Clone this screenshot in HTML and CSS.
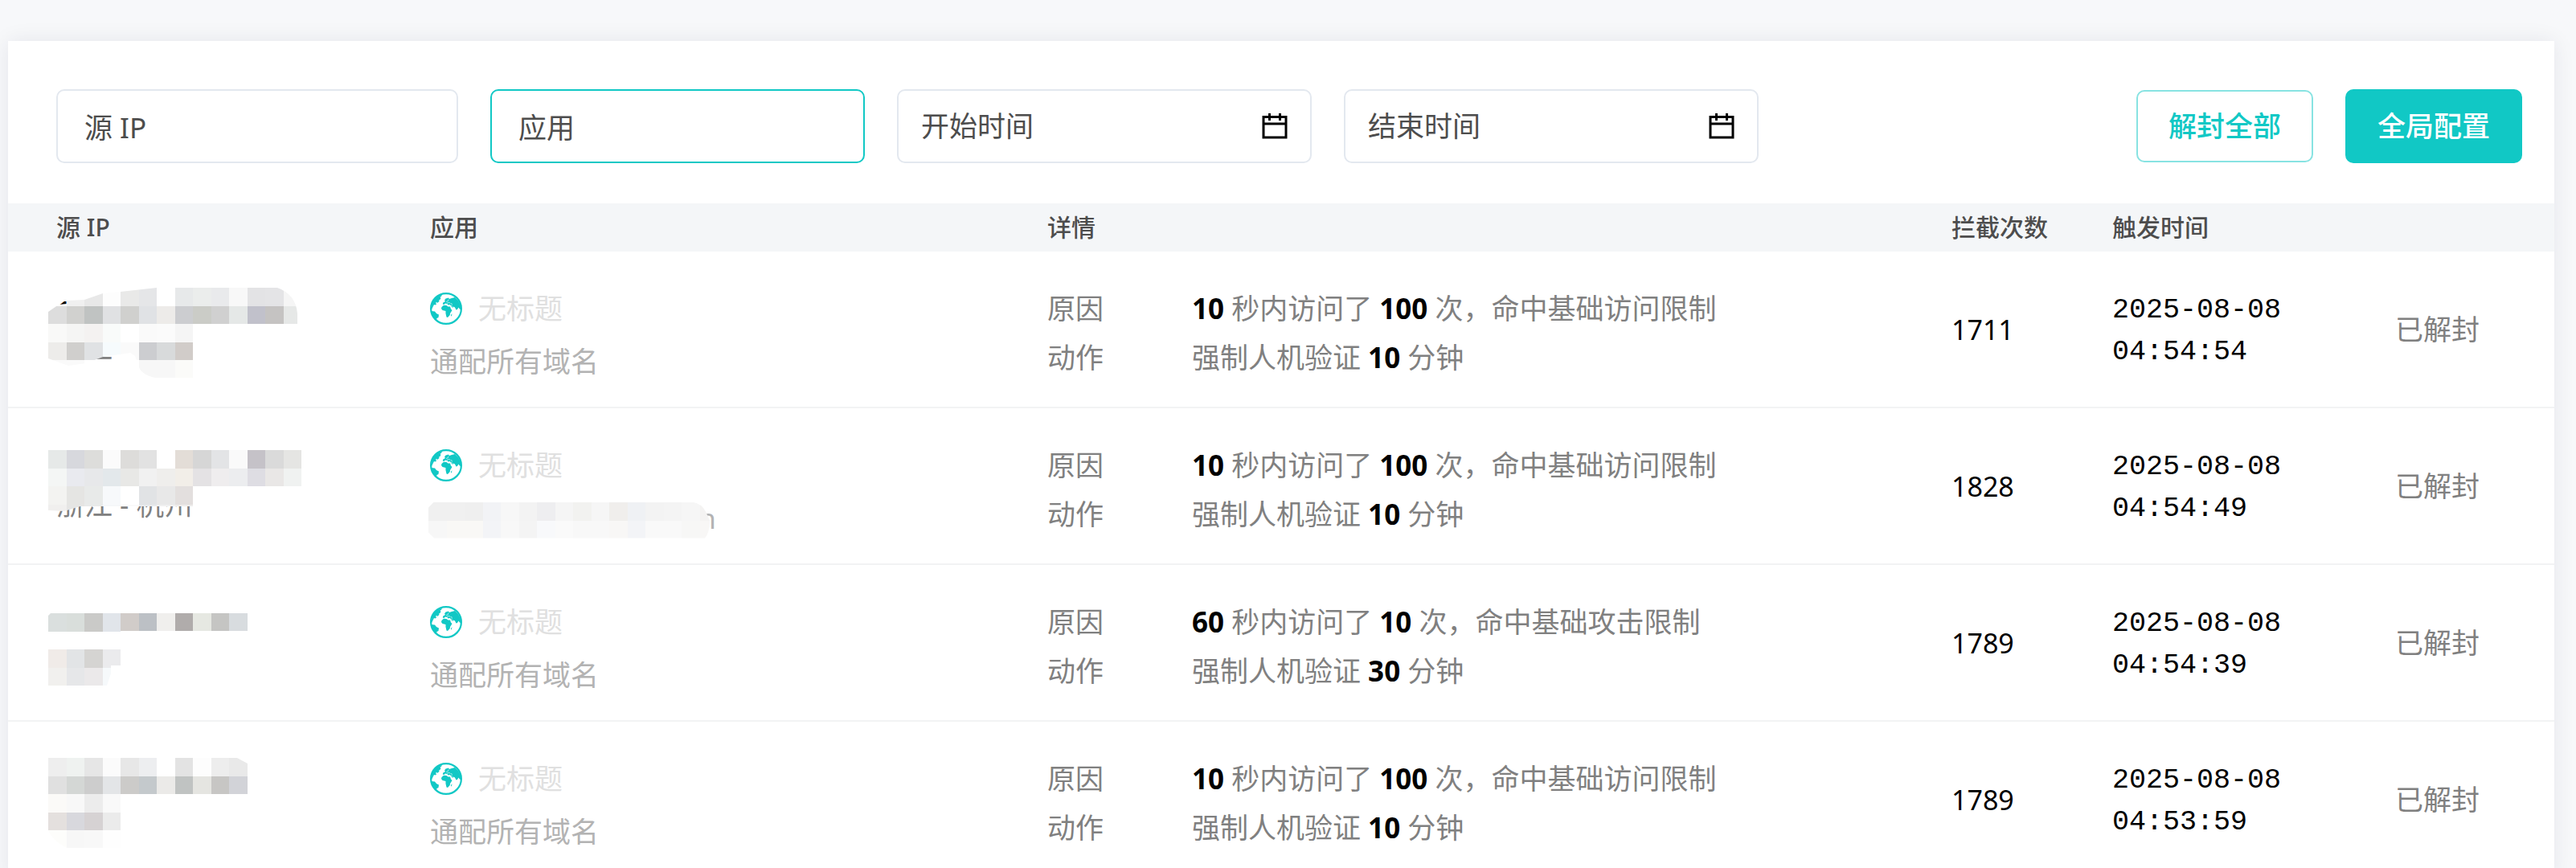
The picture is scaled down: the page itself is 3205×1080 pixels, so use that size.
FILE: index.html
```html
<!DOCTYPE html>
<html lang="zh-CN">

<head>
  <meta charset="UTF-8">
  <title>频率限制</title>
  <link rel="stylesheet" href="styles.css">
</head>

<body>
  <svg class="sprite" aria-hidden="true">
    <symbol id="globe" viewBox="0 0 40 40">
      <circle cx="20" cy="20" r="18.9" fill="none" stroke="currentColor" stroke-width="2.2" />
      <path fill="currentColor" d="M2 18L3 11L9 5L15 2.5L14 5L12.5 5.5L13.5 7L12 9.5L11 9L11.5 11L9 13L8 11.5L7 13.5L8.500 14L6.500 15.500L5 15L3.500 18L2 21Z" />
      <path fill="currentColor" d="M1.500 23L6 23.500L8 26L11 27.500L10.500 31L8.500 32L7.500 35L4 31Z" />
      <path fill="currentColor" d="M14.500 18L17 15.800L20.500 16L22.500 17.500L25 17.500L26 20.500L27.500 22L26 24.500L25 26L24.800 28L22 31L20.500 30.500L19.500 26L19.500 23L15.500 22L14 20Z" />
      <path fill="currentColor" d="M15.800 14.500L16.300 12.500L19 11L18 9.500L19.500 7.500L23 6.500L24 8L27 7L31 6L35 10L38 15L39 22L36.500 20L35.500 18.500L34 21L32.500 21.500L31 18.500L29 17.500L28.500 19L26.500 17.500L25 15L22.500 15.500L21.500 14L19 13.500L17.500 15Z" />
      <path fill="currentColor" d="M26.200 27.500L27.400 26.300L27 29L26 29.500Z" />
      <path fill="none" stroke="#fff" stroke-width="0.6" d="M20 11.500L22.500 10.500L23 8.500M21 13L24 12.500L25.500 13.500M26.500 13L27.500 15.500M26 16L28.500 18" />
    </symbol>
    <symbol id="calendar" viewBox="0 0 32 32">
      <path fill="none" stroke="#000" stroke-width="3" d="M2 4.500H30V30H2ZM2 13H30M9.500 0V9M22.500 0V9" />
    </symbol>
  </svg>

  <main class="card">
    <form class="toolbar">
      <div class="field field-ip">
        <input type="text" placeholder="源 IP" aria-label="源 IP">
      </div>
      <div class="field field-app active">
        <input type="text" placeholder="应用" aria-label="应用">
      </div>
      <div class="field field-date">
        <input type="text" placeholder="开始时间" aria-label="开始时间">
        <button type="button" class="picker" aria-label="开始时间"><svg><use href="#calendar" /></svg></button>
      </div>
      <div class="field field-date">
        <input type="text" placeholder="结束时间" aria-label="结束时间">
        <button type="button" class="picker" aria-label="结束时间"><svg><use href="#calendar" /></svg></button>
      </div>
      <div class="actions">
        <button type="button" class="btn btn-outline">解封全部</button>
        <button type="button" class="btn btn-primary">全局配置</button>
      </div>
    </form>

    <table class="records">
      <thead>
        <tr>
          <th class="col-ip">源 IP</th>
          <th class="col-app">应用</th>
          <th class="col-detail">详情</th>
          <th class="col-count">拦截次数</th>
          <th class="col-time">触发时间</th>
          <th class="col-status"></th>
        </tr>
      </thead>
      <tbody>
        <tr>
          <td class="source">
            <div class="ip">1</div>
            <div class="region">浙江</div>
            <svg class="mosaic mosaic-1" data-mosaic="ip1"></svg>
          </td>
          <td>
            <div class="app-name"><svg class="globe"><use href="#globe" /></svg>无标题</div>
            <div class="domain">通配所有域名</div>
          </td>
          <td>
            <dl class="detail">
              <dt>原因</dt>
              <dd><b>10</b> 秒内访问了 <b>100</b> 次，命中基础访问限制</dd>
              <dt>动作</dt>
              <dd>强制人机验证 <b>10</b> 分钟</dd>
            </dl>
          </td>
          <td class="count">1711</td>
          <td class="time">2025-08-08<br>04:54:54</td>
          <td class="status">已解封</td>
        </tr>
        <tr>
          <td class="source">
            <div class="ip"></div>
            <div class="region">浙江 - 杭州</div>
            <svg class="mosaic mosaic-2" data-mosaic="ip2"></svg>
          </td>
          <td>
            <div class="app-name"><svg class="globe"><use href="#globe" /></svg>无标题</div>
            <div class="domain domain-hidden">n<svg class="mosaic mosaic-domain" data-mosaic="domain"></svg></div>
          </td>
          <td>
            <dl class="detail">
              <dt>原因</dt>
              <dd><b>10</b> 秒内访问了 <b>100</b> 次，命中基础访问限制</dd>
              <dt>动作</dt>
              <dd>强制人机验证 <b>10</b> 分钟</dd>
            </dl>
          </td>
          <td class="count">1828</td>
          <td class="time">2025-08-08<br>04:54:49</td>
          <td class="status">已解封</td>
        </tr>
        <tr>
          <td class="source">
            <svg class="mosaic mosaic-3" data-mosaic="ip3"></svg>
          </td>
          <td>
            <div class="app-name"><svg class="globe"><use href="#globe" /></svg>无标题</div>
            <div class="domain">通配所有域名</div>
          </td>
          <td>
            <dl class="detail">
              <dt>原因</dt>
              <dd><b>60</b> 秒内访问了 <b>10</b> 次，命中基础攻击限制</dd>
              <dt>动作</dt>
              <dd>强制人机验证 <b>30</b> 分钟</dd>
            </dl>
          </td>
          <td class="count">1789</td>
          <td class="time">2025-08-08<br>04:54:39</td>
          <td class="status">已解封</td>
        </tr>
        <tr>
          <td class="source">
            <svg class="mosaic mosaic-4" data-mosaic="ip4"></svg>
          </td>
          <td>
            <div class="app-name"><svg class="globe"><use href="#globe" /></svg>无标题</div>
            <div class="domain">通配所有域名</div>
          </td>
          <td>
            <dl class="detail">
              <dt>原因</dt>
              <dd><b>10</b> 秒内访问了 <b>100</b> 次，命中基础访问限制</dd>
              <dt>动作</dt>
              <dd>强制人机验证 <b>10</b> 分钟</dd>
            </dl>
          </td>
          <td class="count">1789</td>
          <td class="time">2025-08-08<br>04:53:59</td>
          <td class="status">已解封</td>
        </tr>
      </tbody>
    </table>
  </main>
  <script src="mosaic.js"></script>
</body>

</html>
```
FILE: styles.css
```css
* {
  box-sizing: border-box;
}

html,
body {
  height: 100%;
}

body {
  margin: 0;
  padding: 51px 27px 0 10px;
  overflow: hidden;
  background-color: #f7f8fa;
  color: #000;
  font-family: "Noto Sans", "Noto Sans CJK SC", sans-serif;
  font-size: 35px;
  line-height: 52px;
}

.sprite {
  position: absolute;
  width: 0;
  height: 0;
}

.card {
  background-color: #fff;
  box-shadow: 0 0 25px rgba(0, 10, 60, 0.08);
}

/* toolbar */
.toolbar {
  display: flex;
  align-items: center;
  gap: 40px;
  padding: 60px 40px 50px 60px;
}

.field {
  display: flex;
  align-items: center;
  height: 92px;
  border: 2px solid #e3e8ef;
  border-radius: 10px;
  padding: 0 28px;
}

.field-ip {
  width: 500px;
  padding: 3px 33px 0;
}

.field-app {
  width: 466px;
  padding: 3px 33px 0;
}

.field-date {
  width: 516px;
}

.field.active {
  border-color: #11c8c5;
}

.field input {
  flex: 1;
  min-width: 0;
  height: 52px;
  border: 0;
  padding: 0;
  outline: none;
  background: none;
  color: #4d4d4d;
  font: inherit;
}

.field input::placeholder {
  color: #4d4d4d;
  opacity: 1;
}

.picker {
  display: flex;
  border: 0;
  padding: 0;
  background: none;
}

.picker svg {
  width: 32px;
  height: 32px;
}

.actions {
  display: flex;
  align-items: center;
  gap: 40px;
  margin-left: auto;
}

.btn {
  height: 92px;
  border: 0;
  border-radius: 10px;
  padding: 0 40px;
  font: inherit;
  font-weight: 500;
}

.btn-outline {
  height: 90px;
  border: 2px solid #88e3e2;
  padding: 0 38px;
  background-color: #fff;
  color: #11c8c5;
}

.btn-primary {
  background-color: #11c8c5;
  color: #fff;
}

/* table */
.records {
  width: 100%;
  table-layout: fixed;
  border-collapse: separate;
  border-spacing: 0;
}

.records th {
  height: 60px;
  padding: 0;
  background-color: #f4f6f8;
  color: #4d4d4d;
  font-size: 30px;
  font-weight: 500;
  text-align: left;
}

.records th:first-child,
.records td:first-child {
  padding-left: 60px;
}

.records td {
  height: 195px;
  padding: 0;
  border-bottom: 2px solid #f2f3f4;
  vertical-align: middle;
}

.col-ip {
  width: 525px;
}

.col-app {
  width: 768px;
}

.col-count {
  width: 200px;
}

.col-time {
  width: 352px;
}

.col-status {
  width: 198px;
}

.source {
  position: relative;
}

.ip {
  height: 46px;
  line-height: 46px;
}

.region {
  line-height: 46px;
  color: #808080;
}

.app-name {
  display: flex;
  align-items: center;
  gap: 20px;
  padding-top: 14px;
  color: #e0e0e0;
}

.globe {
  width: 40px;
  height: 40px;
  color: #11c8c5;
}

.domain {
  margin-top: 14px;
  color: #b3b3b3;
}

.domain-hidden {
  position: relative;
  width: 356px;
  text-align: right;
}

.detail {
  display: grid;
  grid-template-columns: 180px 1fr;
  row-gap: 9px;
  margin: 0;
  padding-top: 9px;
  color: #808080;
}

.detail dd {
  margin: 0;
}

.detail b {
  color: #000;
}

.count {
  font-size: 34px;
}

.records .time {
  padding-top: 4px;
  font-family: "Liberation Mono", monospace;
}

.status {
  color: #808080;
}

/* masked addresses */
.mosaic {
  position: absolute;
  left: 50px;
  width: 360px;
  height: 113px;
}

.mosaic-1 {
  top: 45px;
  clip-path: path("M0 30L13 21L23 20V16L45 15L68 7L90 5L135 0H285Q308 8 310 32V45H180V112H133Q116 108 113 99L108 85L102 81L68 86L47 94L25 97L0 88Z");
}

.mosaic-2 {
  top: 52px;
  clip-path: path("M0 0H315V45H180V70H40L20 76L0 75Z");
}

.mosaic-3 {
  top: 60px;
  clip-path: path("M3 0H248V22H90V65H78V75L73 90H0V3Z");
}

.mosaic-4 {
  top: 45px;
  clip-path: path("M0 0H235L248 7V112H23Q5 103 0 90Z");
}

.mosaic-domain {
  top: 6px;
  left: -2px;
  clip-path: path("M7 0H328Q340 2 345 12L350 23Q350 38 344 45H7L0 38V7Z");
}
```
FILE: mosaic.js
```js
// fills every masked area with its grid of tiles, one array per line of tiles
var TILE = 22.5;

var mosaics = {
  ip1: [
    ['fafafa', 'f0f0f0', 'e8e8e8', 'fdfdfd', 'e9e9e8', 'e5e6e8', 'ffffff', 'e7e9ea', 'ebedec', 'e9eaec', 'f8f8f8', 'e3e3e5', 'e4e4e6', 'f5f5f5'],
    ['dddddd', 'd1d1cf', 'c0c3c2', 'e0e1e3', 'd0d0ce', 'e0e2e5', 'edebe9', 'cccdd0', 'cbccc7', 'd0d0d0', 'e5e8e7', 'c1c1cb', 'c5c3c2', 'e6e8e7'],
    ['f9f9f8', 'f5f5f4', 'f4f2f1', 'f9fbfa', 'ffffff', 'fafafa', 'fbfbfb', 'f5f5f5'],
    ['edecea', 'd0cfcd', 'e0e2e4', 'f6fbfd', 'fafafa', 'cccdd0', 'd8dadb', 'd1ccc9'],
    ['fafafa', 'fafafa', 'ffffff', 'ffffff', 'ffffff', 'f7f7f7', 'f7f7f7', 'fbfbf9']
  ],
  ip2: [
    ['e6e9e8', 'd7d8dd', 'dddddb', 'fbfbfb', 'dddcda', 'e2e2e2', 'ffffff', 'e3ddd7', 'd6d6d6', 'e3e4e6', 'fafafa', 'c5c2c8', 'dadada', 'e5e5e3'],
    ['f4f6f5', 'e9eaef', 'e7e8ea', 'e3e8eb', 'e8e8e6', 'f1f1f1', 'efeeec', 'f2eee8', 'e4e2e4', 'efedee', 'ecedef', 'dedde3', 'e9e7e6', 'f0f2f1'],
    ['f3f3f1', 'e5e5e3', 'e8eae9', 'f7f9fb', 'ffffff', 'e1e3e5', 'e8e8e8', 'e3dfde'],
    ['f0efee', 'e5e5e4', 'e8eae9', 'f5f7f9', 'fafafa', 'e8eaec', 'f0f0f0', 'eeeceb']
  ],
  ip3: [
    ['dadfde', 'd9dedb', 'cacac8', 'e1e5ea', 'd1ccc9', 'bcc0c5', 'f0efed', 'b0acab', 'e6e8e2', 'c5c5c3', 'd8dcdf'],
    [],
    ['f0ebe8', 'e2e4e6', 'd5d4d2', 'ebebed'],
    ['f1f0ee', 'e6e7e9', 'ebe9ea', 'f6f9fb']
  ],
  ip4: [
    ['eeeeee', 'eff2f0', 'e6e6e6', 'fbfbfb', 'e7e7e7', 'edeef0', 'ffffff', 'e3e3e3', 'fdfdfd', 'ededed', 'e9e9e9'],
    ['e0e0e0', 'd4d7d5', 'cdcdcd', 'e3e5e7', 'cccbc9', 'c4c9cc', 'ebeae8', 'c0c3c2', 'e5e5e1', 'c7c6c4', 'd2d3d8'],
    ['fbfaf8', 'f8f8f8', 'ececec', 'f9f9f9'],
    ['e4e0de', 'd8d8dd', 'd6d2d3', 'ebebeb'],
    ['fdfdfb', 'f7f7f7', 'f8f8f8', 'fefefe']
  ],
  domain: [
    ['f0f0f0', 'f0f0f0', 'efefef', 'f2f3f6', 'f7f7f7', 'f3f3f3', 'eeeef0', 'f5f5f5', 'f2f2f0', 'f6f6f6', 'f0eeec', 'eff1f4', 'f3f3f3', 'f4f4f4', 'f6f6f6', 'f4f3f2'],
    ['f7f7f7', 'f9f8f6', 'f9f8f6', 'f3f4f7', 'f8f8f8', 'f4f4f4', 'f8f9fb', 'fafafa', 'f8f8f8', 'f8f8f8', 'f8f7f6', 'f3f4f7', 'f9f9f9', 'f9f9f9', 'f7f7f6', 'f8f7f6']
  ]
};

document.querySelectorAll('[data-mosaic]').forEach(function (svg) {
  mosaics[svg.dataset.mosaic].forEach(function (line, row) {
    line.forEach(function (color, col) {
      var x = Math.round(col * TILE);
      var y = Math.round(row * TILE);
      var tile = document.createElementNS('http://www.w3.org/2000/svg', 'rect');
      tile.setAttribute('x', x);
      tile.setAttribute('y', y);
      tile.setAttribute('width', Math.round((col + 1) * TILE) - x);
      tile.setAttribute('height', Math.round((row + 1) * TILE) - y);
      tile.setAttribute('fill', '#' + color);
      svg.appendChild(tile);
    });
  });
});
```
